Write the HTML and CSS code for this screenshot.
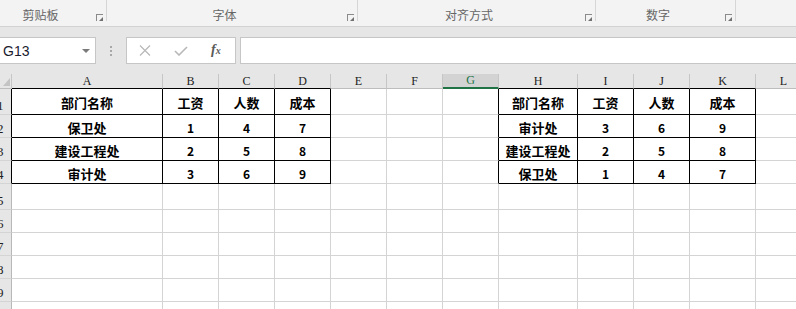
FILE: index.html
```html
<!DOCTYPE HTML>
<html>
<head>
<meta charset="UTF-8">
<title>排序</title>
<link rel="stylesheet" href="styles.css">
</head>
<body>
<div class="ribbon">
    <div class="group g1"><span>剪贴板</span><i class="launch"></i></div>
    <div class="group g2"><span>字体</span><i class="launch"></i></div>
    <div class="group g3"><span>对齐方式</span><i class="launch"></i></div>
    <div class="group g4"><span>数字</span><i class="launch"></i></div>
</div>
<div class="fbar">
    <div class="namebox"><span>G13</span><b class="arrow"></b></div>
    <div class="dots"><i></i><i></i><i></i></div>
    <div class="fxbox">
        <svg class="ic-x" width="12" height="11" viewBox="0 0 12 11"><path d="M1 0.5L11 10.5M11 0.5L1 10.5" stroke="#b8b8b8" stroke-width="1.2" fill="none"/></svg>
        <svg class="ic-ok" width="14" height="10" viewBox="0 0 14 10"><path d="M1 5L5 9L13 1" stroke="#b8b8b8" stroke-width="1.6" fill="none"/></svg>
        <span class="fx">f<sub>x</sub></span>
    </div>
    <div class="input"></div>
</div>
<table class="sheet">
    <colgroup>
        <col style="width:12px"><col style="width:151px"><col style="width:56px"><col style="width:56px"><col style="width:56px"><col style="width:56px"><col style="width:56px"><col style="width:56px"><col style="width:79px"><col style="width:56px"><col style="width:56px"><col style="width:66px"><col style="width:56px">
    </colgroup>
    <tr class="hd">
        <th class="corner"><i></i></th><th class="tb">A</th><th class="tb">B</th><th class="tb">C</th><th class="tb">D</th><th>E</th><th>F</th><th class="sel">G</th><th class="tb">H</th><th class="tb">I</th><th class="tb">J</th><th class="tb">K</th><th>L</th>
    </tr>
    <tr class="tall">
        <th class="rh rt"><span>1</span></th><td class="t">部门名称</td><td class="t">工资</td><td class="t">人数</td><td class="t">成本</td><td></td><td></td><td class="gl"></td><td class="t">部门名称</td><td class="t">工资</td><td class="t">人数</td><td class="t">成本</td><td></td>
    </tr>
    <tr>
        <th class="rh rt"><span>2</span></th><td class="t">保卫处</td><td class="t n">1</td><td class="t n">4</td><td class="t n">7</td><td></td><td></td><td class="gl"></td><td class="t">审计处</td><td class="t n">3</td><td class="t n">6</td><td class="t n">9</td><td></td>
    </tr>
    <tr>
        <th class="rh rt"><span>3</span></th><td class="t">建设工程处</td><td class="t n">2</td><td class="t n">5</td><td class="t n">8</td><td></td><td></td><td class="gl"></td><td class="t">建设工程处</td><td class="t n">2</td><td class="t n">5</td><td class="t n">8</td><td></td>
    </tr>
    <tr>
        <th class="rh rt"><span>4</span></th><td class="t">审计处</td><td class="t n">3</td><td class="t n">6</td><td class="t n">9</td><td></td><td></td><td class="gl"></td><td class="t">保卫处</td><td class="t n">1</td><td class="t n">4</td><td class="t n">7</td><td></td>
    </tr>
    <tr class="tall">
        <th class="rh"><span>5</span></th><td></td><td></td><td></td><td></td><td></td><td></td><td></td><td></td><td></td><td></td><td></td><td></td>
    </tr>
    <tr>
        <th class="rh"><span>6</span></th><td></td><td></td><td></td><td></td><td></td><td></td><td></td><td></td><td></td><td></td><td></td><td></td>
    </tr>
    <tr>
        <th class="rh"><span>7</span></th><td></td><td></td><td></td><td></td><td></td><td></td><td></td><td></td><td></td><td></td><td></td><td></td>
    </tr>
    <tr>
        <th class="rh"><span>8</span></th><td></td><td></td><td></td><td></td><td></td><td></td><td></td><td></td><td></td><td></td><td></td><td></td>
    </tr>
    <tr>
        <th class="rh"><span>9</span></th><td></td><td></td><td></td><td></td><td></td><td></td><td></td><td></td><td></td><td></td><td></td><td></td>
    </tr>
    <tr>
        <th class="rh"><span>10</span></th><td></td><td></td><td></td><td></td><td></td><td></td><td></td><td></td><td></td><td></td><td></td><td></td>
    </tr>
</table>
</body>
</html>
```

FILE: styles.css
```css
*{margin:0;padding:0;box-sizing:border-box;}
body{width:796px;height:309px;overflow:hidden;background:#e6e6e6;font-family:"Noto Sans CJK SC","Noto Sans",sans-serif;}

.ribbon{display:flex;height:27px;background:#f3f3f3;border-bottom:1px solid #d2d2d2;}
.group{position:relative;height:26px;display:flex;justify-content:center;padding-top:8px;padding-right:16px;font-size:12px;line-height:14px;color:#666;}
.group::after{content:"";position:absolute;right:0;top:0;height:21px;border-right:1px solid #d6d6d6;}
.g1{width:107px;padding-right:26px;}
.g2{width:251px;}
.g3{width:238px;}
.g4{width:140px;}
.launch{position:absolute;right:4px;bottom:5px;width:7px;height:7px;border-left:1px solid #8a8a8a;border-top:1px solid #8a8a8a;}
.launch::after{content:"";position:absolute;right:0;bottom:0;border-style:solid;border-width:0 0 4px 4px;border-color:transparent transparent #707070 transparent;}

.fbar{display:flex;height:27px;margin-top:10px;margin-bottom:10px;}
.namebox{width:97px;margin-left:-1px;background:#fff;border:1px solid #c6c6c6;display:flex;align-items:center;justify-content:space-between;padding:0 5px 0 3px;font-family:"Liberation Sans",Arial,sans-serif;font-size:14px;color:#1b1b2e;}
.arrow{border-style:solid;border-width:4px 4px 0 4px;border-color:#7a7a7a transparent transparent transparent;}
.dots{width:30px;display:flex;flex-direction:column;align-items:center;justify-content:center;gap:2px;}
.dots i{width:2px;height:2px;background:#a8a8a8;}
.fxbox{width:110px;background:#fff;border:1px solid #c6c6c6;display:flex;align-items:center;padding-left:12px;}
.ic-ok{margin-left:23px;}
.fx{margin-left:23px;font-family:"Liberation Serif",serif;font-style:italic;font-weight:bold;font-size:14px;color:#595959;line-height:14px;}
.fx sub{font-size:10px;vertical-align:0;}
.input{flex:1;margin-left:4px;background:#fff;border:1px solid #c6c6c6;border-right:0;}

.sheet{table-layout:fixed;border-collapse:separate;border-spacing:0;width:812px;background:#fff;}
.sheet tr{height:23px;}
.sheet tr.tall{height:26px;}
.sheet tr.hd{height:15px;}
.sheet th,.sheet td{border-right:1px solid #d4d4d4;border-bottom:1px solid #d4d4d4;padding:0;overflow:hidden;white-space:nowrap;}
.hd th{background:#e6e6e6;border-right-color:#c6c6c6;border-bottom-color:#bdbdbd;font-family:"Liberation Serif",serif;font-weight:normal;font-size:12px;line-height:13px;color:#222;text-align:center;vertical-align:bottom;}
.hd th.sel{background:#d3d3d3;color:#217346;border-bottom:2px solid #217346;}
.hd th.tb{border-bottom-color:#000;}
.corner{position:relative;}
.corner i{position:absolute;left:3px;bottom:2px;border-style:solid;border-width:0 0 8px 7px;border-color:transparent transparent #c4c4c4 transparent;}
.rh{background:#e6e6e6;border-right-color:#b8b8b8 !important;font-family:"Liberation Serif",serif;font-weight:normal;font-size:13px;line-height:12px;color:#222;text-align:left;vertical-align:bottom;padding-bottom:2px !important;}
.rh span{display:block;margin-left:-3px;}
.rh.rt{border-right-color:#000 !important;}
.sheet td{font-size:13px;font-weight:bold;color:#000;text-align:center;vertical-align:middle;padding-top:2px;}
.sheet td.n{font-size:12px;}
.sheet td.t{border-right-color:#000;border-bottom-color:#000;}
.sheet td.gl{border-right-color:#000;}
```
